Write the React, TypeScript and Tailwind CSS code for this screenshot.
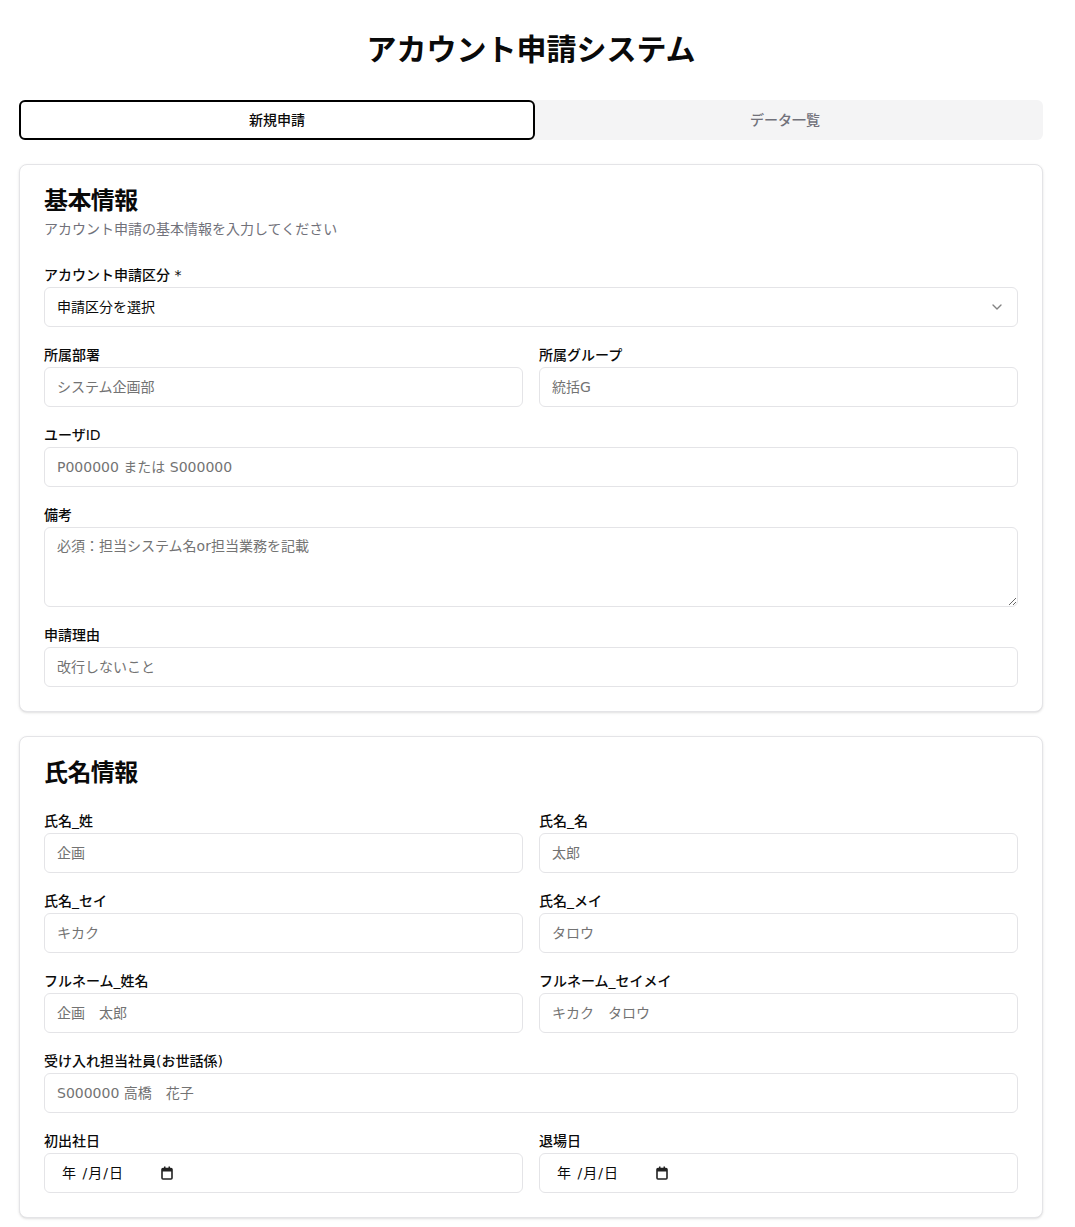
import React from 'react';
import { ChevronDown } from 'lucide-react';

const inputCls =
  'flex h-10 w-full rounded-md border border-[#e4e4e7] bg-white px-3 py-2 text-sm text-[#0a0a0a] placeholder:text-[#737373] outline-none';

const Field: React.FC<{ label: string; children: React.ReactNode }> = ({ label, children }) => (
  <div className="flex flex-col gap-[2px]">
    <label className="pt-px text-sm leading-5 font-medium text-[#0a0a0a]">{label}</label>
    {children}
  </div>
);

const DateField: React.FC = () => (
  <div className="flex h-10 w-full items-center rounded-md border border-[#e4e4e7] bg-white pl-[17px] text-sm text-[#0a0a0a]">
    <span className="tracking-[1px]">年 /月/日</span>
    {/* calendar picker indicator */}
    <svg className="ml-[37px] h-[14px] w-[12px]" viewBox="0 0 12 14" fill="none">
      <rect x="1" y="2.5" width="10" height="10.5" rx="1" stroke="#222" strokeWidth="1.6" />
      <rect x="1" y="2.5" width="10" height="3" fill="#222" />
      <rect x="3" y="0.5" width="1.5" height="3" fill="#222" />
      <rect x="7.5" y="0.5" width="1.5" height="3" fill="#222" />
    </svg>
  </div>
);

export default function App() {
  return (
    <div
      className="min-h-screen bg-white pr-[13px] text-[#0a0a0a]"
      style={{ fontFamily: '"DejaVu Sans", "Noto Sans CJK JP", sans-serif' }}
    >
      <div className="mx-auto max-w-5xl py-8">
        <h1 className="mb-8 text-center text-3xl font-bold">アカウント申請システム</h1>

        {/* Tabs */}
        <div className="mb-6 grid h-10 grid-cols-[516px_1fr] rounded-md bg-[#f4f4f5]">
          <button className="rounded-md border-2 border-black bg-white text-sm font-medium text-[#0a0a0a]">
            新規申請
          </button>
          <button className="pr-2 text-sm font-medium text-[#71717a]">データ一覧</button>
        </div>

        <div className="flex flex-col gap-6">
          {/* 基本情報 */}
          <div className="rounded-lg border border-[#e4e4e7] bg-white shadow-sm">
            <div className="flex flex-col gap-1.5 p-6">
              <h2 className="text-2xl leading-none font-bold tracking-tight">基本情報</h2>
              <p className="text-sm text-[#71717a]">アカウント申請の基本情報を入力してください</p>
            </div>
            <div className="flex flex-col gap-[17px] px-6 pt-px pb-6">
              <Field label="アカウント申請区分 *">
                <button className="flex h-10 w-full items-center justify-between rounded-md border border-[#e4e4e7] bg-white px-3 text-sm text-[#0a0a0a]">
                  <span>申請区分を選択</span>
                  <ChevronDown className="h-4 w-4 opacity-50" />
                </button>
              </Field>
              <div className="grid grid-cols-2 gap-4">
                <Field label="所属部署">
                  <input className={inputCls} placeholder="システム企画部" />
                </Field>
                <Field label="所属グループ">
                  <input className={inputCls} placeholder="統括G" />
                </Field>
              </div>
              <Field label="ユーザID">
                <input className={inputCls} placeholder="P000000 または S000000" />
              </Field>
              <Field label="備考">
                <textarea
                  className="flex min-h-[80px] w-full rounded-md border border-[#e4e4e7] bg-white px-3 py-2 text-sm placeholder:text-[#737373] outline-none"
                  placeholder="必須：担当システム名or担当業務を記載"
                />
              </Field>
              <Field label="申請理由">
                <input className={inputCls} placeholder="改行しないこと" />
              </Field>
            </div>
          </div>

          {/* 氏名情報 */}
          <div className="rounded-lg border border-[#e4e4e7] bg-white shadow-sm">
            <div className="p-6">
              <h2 className="text-2xl leading-none font-bold tracking-tight">氏名情報</h2>
            </div>
            <div className="flex flex-col gap-[17px] px-6 pt-px pb-6">
              <div className="grid grid-cols-2 gap-4">
                <Field label="氏名_姓">
                  <input className={inputCls} placeholder="企画" />
                </Field>
                <Field label="氏名_名">
                  <input className={inputCls} placeholder="太郎" />
                </Field>
              </div>
              <div className="grid grid-cols-2 gap-4">
                <Field label="氏名_セイ">
                  <input className={inputCls} placeholder="キカク" />
                </Field>
                <Field label="氏名_メイ">
                  <input className={inputCls} placeholder="タロウ" />
                </Field>
              </div>
              <div className="grid grid-cols-2 gap-4">
                <Field label="フルネーム_姓名">
                  <input className={inputCls} placeholder="企画　太郎" />
                </Field>
                <Field label="フルネーム_セイメイ">
                  <input className={inputCls} placeholder="キカク　タロウ" />
                </Field>
              </div>
              <Field label="受け入れ担当社員(お世話係)">
                <input className={inputCls} placeholder="S000000 高橋　花子" />
              </Field>
              <div className="grid grid-cols-2 gap-4">
                <Field label="初出社日">
                  <DateField />
                </Field>
                <Field label="退場日">
                  <DateField />
                </Field>
              </div>
            </div>
          </div>
        </div>
      </div>
    </div>
  );
}
